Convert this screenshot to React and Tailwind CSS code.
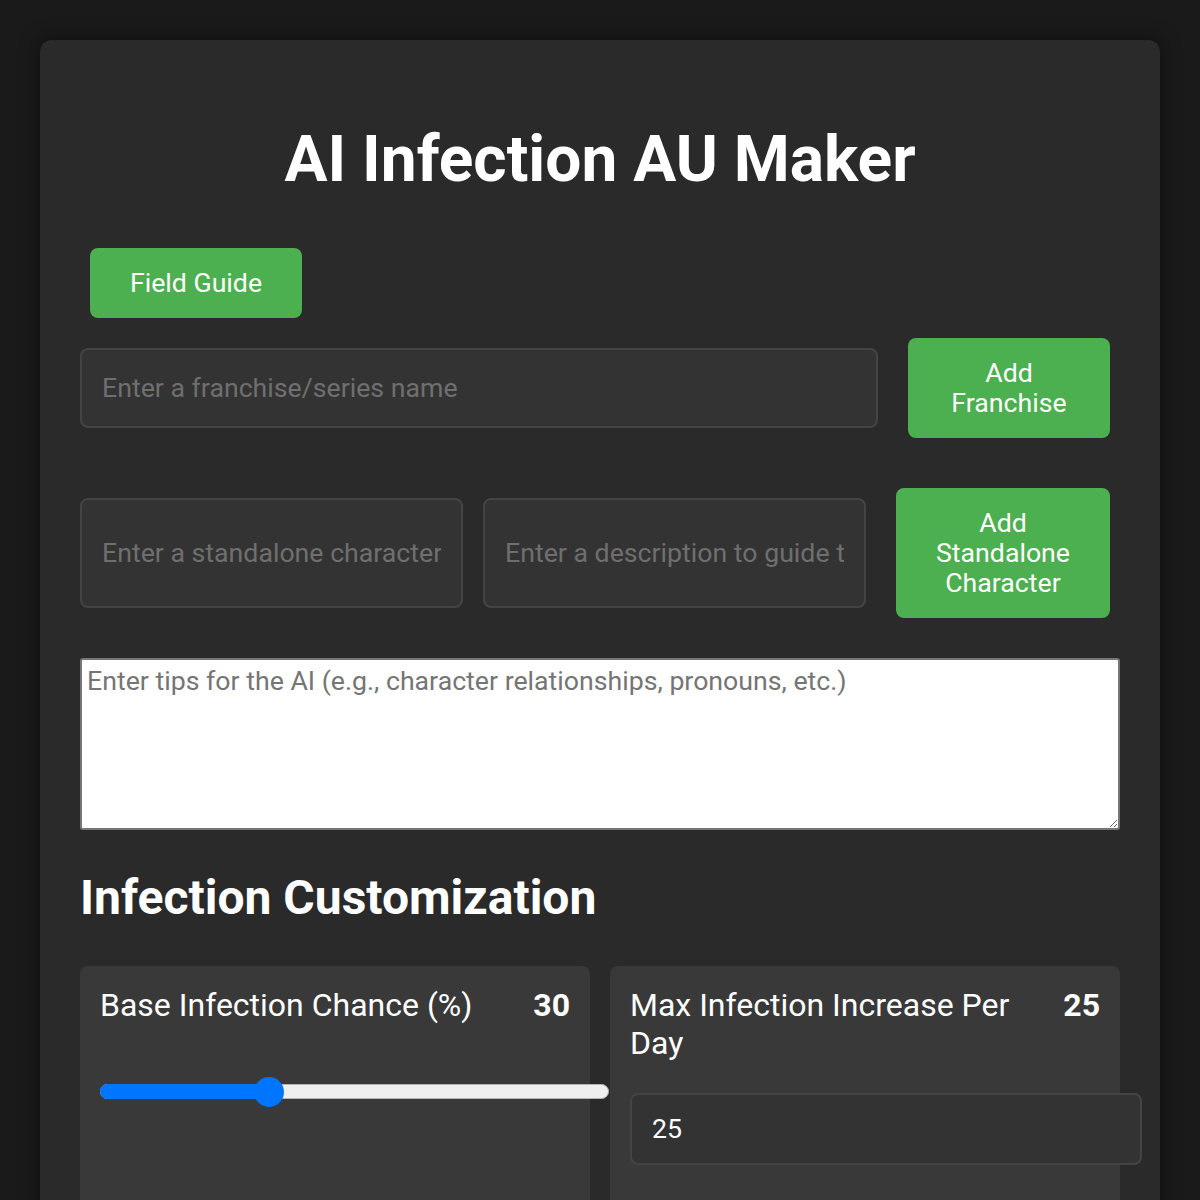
import React from 'react';

const App = () => {
  return (
    <div className="min-h-screen bg-[#1a1a1a] p-10 font-['Roboto',sans-serif] text-white">
      <div className="rounded-xl bg-[#2a2a2a] px-10 pt-10 pb-16 shadow-[0_0_20px_rgba(0,0,0,0.5)]">
        {/* Title */}
        <h1 className="mt-[45px] text-center text-[64px] font-bold leading-[70px]">AI Infection AU Maker</h1>

        <div className="mt-[43px]">
          <button className="m-[10px] h-[70px] w-[212px] rounded-lg bg-[#4caf50] text-[26.7px] text-white">
            Field Guide
          </button>
        </div>

        {/* Franchise row */}
        <div className="flex items-center gap-5">
          <input
            type="text"
            placeholder="Enter a franchise/series name"
            className="h-20 min-w-0 flex-1 rounded-lg border-2 border-[#444] bg-[#333] px-5 text-[26.7px] text-white outline-none placeholder:text-[#6f6f6f]"
          />
          <button className="m-[10px] h-[100px] w-[202px] rounded-lg bg-[#4caf50] px-5 text-[26.7px] leading-[30px] text-white">
            Add Franchise
          </button>
        </div>

        {/* Standalone character row */}
        <div className="mt-[30px] flex items-center gap-5">
          <input
            type="text"
            placeholder="Enter a standalone character"
            className="h-[110px] min-w-0 flex-1 rounded-lg border-2 border-[#444] bg-[#333] px-5 text-[26.7px] text-white outline-none placeholder:text-[#6f6f6f]"
          />
          <input
            type="text"
            placeholder="Enter a description to guide the AI"
            className="h-[110px] min-w-0 flex-1 rounded-lg border-2 border-[#444] bg-[#333] px-5 text-[26.7px] text-white outline-none placeholder:text-[#6f6f6f]"
          />
          <button className="m-[10px] h-[130px] w-[214px] rounded-lg bg-[#4caf50] px-5 text-[26.7px] leading-[30px] text-white">
            Add Standalone Character
          </button>
        </div>

        {/* Tips */}
        <textarea
          placeholder="Enter tips for the AI (e.g., character relationships, pronouns, etc.)"
          className="mt-[30px] block h-[172px] w-full rounded-[3px] border-2 border-[#767676] bg-white px-[5px] py-[3px] text-[26.7px] leading-[36px] text-black outline-none placeholder:text-[#757575]"
        />

        <h2 className="mt-[38px] text-[48px] font-bold leading-[60px]">Infection Customization</h2>

        {/* Settings */}
        <div className="mt-[38px] grid grid-cols-2 gap-5">
          <div className="min-h-[400px] rounded-lg bg-[#393939] p-5">
            <div className="flex items-start justify-between gap-4">
              <span className="text-[32px] leading-[38px]">Base Infection Chance (%)</span>
              <span className="text-[32px] font-bold leading-[38px]">30</span>
            </div>
            <div className="relative mt-[53px] h-[30px] w-[509px]">
              <div className="absolute left-0 right-0 top-[7px] h-[15px] rounded-full border border-[#b5b5b5] bg-[#efefef]" />
              <div className="absolute left-0 top-[7px] h-[15px] w-[170px] rounded-full bg-[#0075ff]" />
              <div className="absolute left-[154px] top-0 h-[30px] w-[30px] rounded-full bg-[#0075ff]" />
            </div>
          </div>

          <div className="min-h-[400px] rounded-lg bg-[#393939] p-5">
            <div className="flex items-start justify-between gap-4">
              <span className="text-[32px] leading-[38px]">Max Infection Increase Per Day</span>
              <span className="text-[32px] font-bold leading-[38px]">25</span>
            </div>
            <input
              type="number"
              defaultValue={25}
              className="mt-[31px] h-[72px] w-[512px] rounded-lg border-2 border-[#444] bg-[#333] px-5 text-[26.7px] text-white outline-none"
            />
          </div>
        </div>
      </div>
    </div>
  );
};

export default App;
